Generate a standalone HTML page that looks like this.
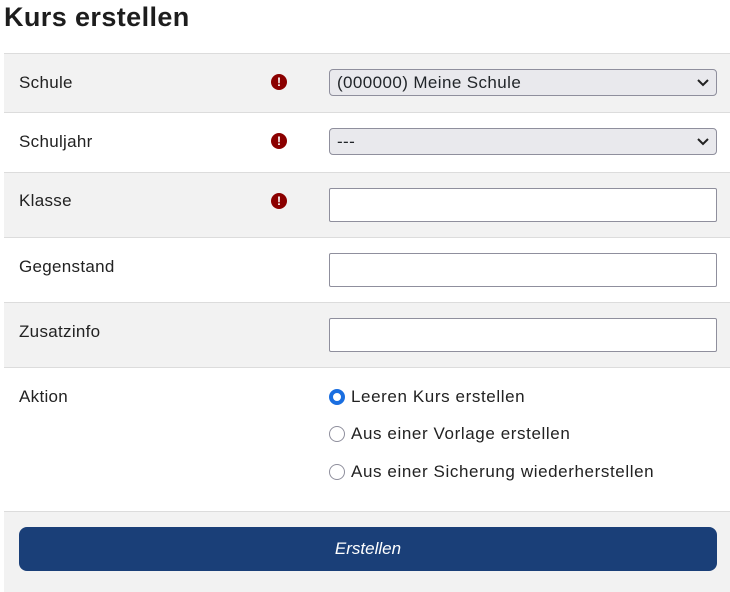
<!DOCTYPE html>
<html><head><style>
body{margin:0;background:#fff;font-family:"Liberation Sans",sans-serif;color:#212529;width:730px;height:587px;overflow:hidden;position:relative}
h1{position:absolute;left:4px;top:2px;margin:0;font-size:27px;font-weight:bold;color:#1d1d1d;letter-spacing:0.4px}
.row{position:absolute;left:4px;width:726px;border-top:1px solid #dcdcdc}
.g{background:#f2f2f2}
.lab{position:absolute;left:15px;font-size:17px;color:#222;letter-spacing:0.3px}
.ic{position:absolute;left:267px;width:16px;height:16px;border-radius:50%;background:#8b0000;color:#fff;font-size:12px;font-weight:bold;text-align:center;line-height:16px}
.sel{position:absolute;left:325px;height:27px;border:1px solid #8f8f9d;border-radius:4px;background:#e9e9ed;font-size:17px;line-height:26px;padding-left:7px;box-sizing:border-box;width:388px;letter-spacing:0.4px}
.sel svg{position:absolute;right:7px;top:9px}
.inp{position:absolute;left:325px;width:388px;height:34px;border:1px solid #8f8f9d;border-radius:2px;background:#fff;box-sizing:border-box}
.rad{position:absolute;left:325px;font-size:17px;color:#222;letter-spacing:0.6px}
.rad span{display:inline-block;width:16px;height:16px;border:1.5px solid #8f8f9d;border-radius:50%;vertical-align:-3px;margin-right:6px;box-sizing:border-box}
.rad span.on{border:4px solid #1a6ee0;background:#fff}
.btn{position:absolute;left:15px;top:15px;width:698px;height:44px;background:#1a3f78;border-radius:8px;color:#fff;font-style:italic;font-size:17px;text-align:center;line-height:44px}
</style></head><body>
<h1>Kurs erstellen</h1>
<div class="row g" style="top:53px;height:59px">
<div class="lab" style="top:19px">Schule</div><div class="ic" style="top:20px">!</div>
<div class="sel" style="top:15px">(000000) Meine Schule<svg width="12" height="8"><path d="M1 1l5 5 5-5" stroke="#222" stroke-width="2" fill="none"/></svg></div></div>
<div class="row" style="top:112px;height:60px">
<div class="lab" style="top:19px">Schuljahr</div><div class="ic" style="top:20px">!</div>
<div class="sel" style="top:15px">---<svg width="12" height="8"><path d="M1 1l5 5 5-5" stroke="#222" stroke-width="2" fill="none"/></svg></div></div>
<div class="row g" style="top:172px;height:65px">
<div class="lab" style="top:18px">Klasse</div><div class="ic" style="top:20px">!</div>
<div class="inp" style="top:15px"></div></div>
<div class="row" style="top:237px;height:65px">
<div class="lab" style="top:19px">Gegenstand</div>
<div class="inp" style="top:15px"></div></div>
<div class="row g" style="top:302px;height:65px">
<div class="lab" style="top:19px">Zusatzinfo</div>
<div class="inp" style="top:15px"></div></div>
<div class="row" style="top:367px;height:144px">
<div class="lab" style="top:19px">Aktion</div>
<div class="rad" style="top:19px"><span class="on"></span>Leeren Kurs erstellen</div>
<div class="rad" style="top:56px"><span></span>Aus einer Vorlage erstellen</div>
<div class="rad" style="top:94px"><span></span>Aus einer Sicherung wiederherstellen</div></div>
<div class="row g" style="top:511px;height:80px"><div class="btn">Erstellen</div></div>
</body></html>
